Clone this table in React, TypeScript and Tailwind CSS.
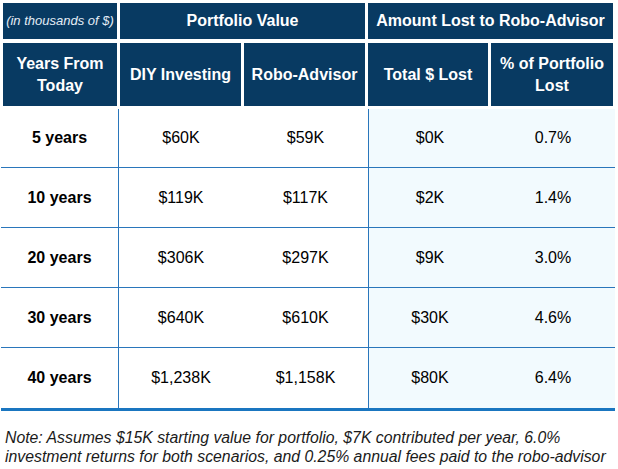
import React from "react";

const rows = [
  ["5 years", "$60K", "$59K", "$0K", "0.7%"],
  ["10 years", "$119K", "$117K", "$2K", "1.4%"],
  ["20 years", "$306K", "$297K", "$9K", "3.0%"],
  ["30 years", "$640K", "$610K", "$30K", "4.6%"],
  ["40 years", "$1,238K", "$1,158K", "$80K", "6.4%"],
];

export default function App() {
  return (
    <div className="w-[618px] h-[469px] bg-white font-['Liberation_Sans',Arial,sans-serif] text-black overflow-hidden">
      {/* Header */}
      <div className="pt-[3px] pl-[3px]">
        <div className="grid grid-cols-[114px_121px_121px_120px_122px] gap-x-[3px] gap-y-[4px] grid-rows-[36px_63px]">
          <div className="bg-[#083a62] flex items-center justify-center text-[13px] italic text-[#e4edf6]">
            (in thousands of $)
          </div>
          <div className="col-span-2 bg-[#083a62] flex items-center justify-center text-[16px] font-bold text-white">
            Portfolio Value
          </div>
          <div className="col-span-2 bg-[#083a62] flex items-center justify-center text-[16px] font-bold text-white">
            Amount Lost to Robo-Advisor
          </div>
          <div className="bg-[#083a62] flex items-center justify-center text-center text-[16px] leading-[22px] font-bold text-white">
            Years From
            <br />
            Today
          </div>
          <div className="bg-[#083a62] flex items-center justify-center text-[16px] font-bold text-white">
            DIY Investing
          </div>
          <div className="bg-[#083a62] flex items-center justify-center text-[16px] font-bold text-white">
            Robo-Advisor
          </div>
          <div className="bg-[#083a62] flex items-center justify-center text-[16px] font-bold text-white">
            Total $ Lost
          </div>
          <div className="bg-[#083a62] flex items-center justify-center text-center text-[16px] leading-[22px] font-bold text-white">
            % of Portfolio
            <br />
            Lost
          </div>
        </div>
      </div>

      {/* Body */}
      <div className="ml-[1px] mt-[3px] w-[614px]">
        {rows.map((r, i) => (
          <div
            key={i}
            className={`flex text-[16px] ${i === 0 ? "h-[59px]" : "h-[60px]"} ${
              i < rows.length - 1 ? "border-b border-[#2a76bb]" : ""
            }`}
          >
            <div className="w-[118px] border-r border-[#2a76bb] flex items-center justify-center font-bold">
              {r[0]}
            </div>
            <div className="w-[124px] flex items-center justify-center">{r[1]}</div>
            <div className="w-[126px] border-r border-[#2a76bb] flex items-center justify-center">
              {r[2]}
            </div>
            <div className="w-[122px] bg-[#f2fafe] flex items-center justify-center">{r[3]}</div>
            <div className="w-[124px] bg-[#f2fafe] flex items-center justify-center">{r[4]}</div>
          </div>
        ))}
        <div className="h-[3px] bg-[#1a76c0]" />
      </div>

      {/* Note */}
      <div className="mt-[17px] pl-[5px] text-[15.8px] leading-[19px] italic text-[#1a1a1a]">
        Note: Assumes $15K starting value for portfolio, $7K contributed per year, 6.0%
        <br />
        investment returns for both scenarios, and 0.25% annual fees paid to the robo-advisor
      </div>
    </div>
  );
}
